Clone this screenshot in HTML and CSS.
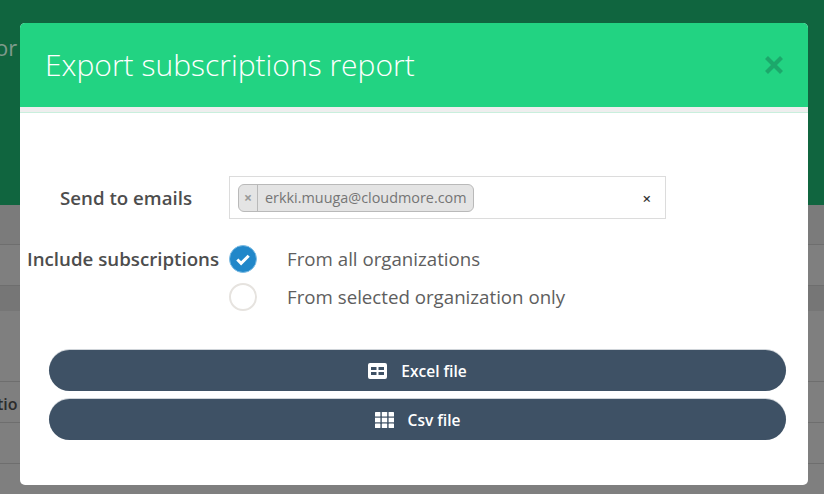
FILE: index.html
```html
<!DOCTYPE html>
<html lang="en">
<head>
<meta charset="utf-8">
<title>Export subscriptions report</title>
<link rel="stylesheet" href="styles.css">
</head>
<body>
<div class="page">
  <div class="hero"><span class="hero-text">or</span></div>
  <div class="row row-a"></div>
  <div class="row row-b"></div>
  <div class="row row-c"></div>
  <div class="row row-d"><span class="row-text">tio</span></div>
  <div class="row row-e"></div>
  <div class="row row-f"></div>
</div>
<div class="modal">
  <header class="modal-header">
    <h1 class="modal-title">Export subscriptions report</h1>
    <svg class="close" width="18" height="18" viewBox="0 0 18 18"><path d="M1.500 1.500 16.500 16.500M16.500 1.500 1.500 16.500" stroke="#1ca86b" stroke-width="4.200" fill="none"/></svg>
  </header>
  <div class="strip"></div>
  <div class="modal-body">
    <div class="field field-email">
      <label class="label label-email">Send to emails</label>
      <div class="select">
        <span class="tag"><span class="tag-x">×</span><span class="tag-text">erkki.muuga@cloudmore.com</span></span>
        <span class="clear">×</span>
      </div>
    </div>
    <div class="field field-radios">
      <label class="label label-include">Include subscriptions</label>
      <div class="radios">
        <div class="radio-row">
          <span class="radio radio-on"><svg width="16" height="13" viewBox="0 0 16 13"><path d="M2.300 6.500 6.100 10.300 13.700 2.700" stroke="#fff" stroke-width="3" fill="none"/></svg></span>
          <span class="radio-label">From all organizations</span>
        </div>
        <div class="radio-row">
          <span class="radio"></span>
          <span class="radio-label">From selected organization only</span>
        </div>
      </div>
    </div>
    <div class="actions">
      <button class="btn" type="button">
        <svg class="btn-icon" width="19" height="16" viewBox="0 0 19 16"><path fill="#fff" fill-rule="evenodd" d="M2 0H17A2 2 0 0 1 19 2V14A2 2 0 0 1 17 16H2A2 2 0 0 1 0 14V2A2 2 0 0 1 2 0ZM3 4V7H8.500V4ZM10.500 4V7H16V4ZM3 9V12H8.500V9ZM10.500 9V12H16V9Z"/></svg>
        <span>Excel file</span>
      </button>
      <button class="btn" type="button">
        <svg class="btn-icon" width="19" height="16" viewBox="0 0 19 16"><g fill="#fff"><rect width="5.400" height="4.600" rx=".6"/><rect x="6.800" width="5.400" height="4.600" rx=".6"/><rect x="13.600" width="5.400" height="4.600" rx=".6"/><rect y="5.700" width="5.400" height="4.600"/><rect x="6.800" y="5.700" width="5.400" height="4.600"/><rect x="13.600" y="5.700" width="5.400" height="4.600"/><rect y="11.400" width="5.400" height="4.600" rx=".6"/><rect x="6.800" y="11.400" width="5.400" height="4.600" rx=".6"/><rect x="13.600" y="11.400" width="5.400" height="4.600" rx=".6"/></g></svg>
        <span>Csv file</span>
      </button>
    </div>
  </div>
</div>
</body>
</html>
```
FILE: styles.css
```css
* { box-sizing: border-box; }
html, body { margin: 0; height: 100%; overflow: hidden; }
body { background: #7f7f7f; font-family: "Open Sans", sans-serif; position: relative; }

.page { display: flex; flex-direction: column; height: 494px; }
.hero { height: 205px; background: #10653f; color: #7f9a8c; font-size: 22px; padding: 37px 0 0; }
.hero-text { display: block; line-height: 20px; width: 20px; text-indent: -5px; }
.row { border-bottom: 1px solid #6e6e6e; flex: none; }
.row-a { height: 40px; background: #7b7b7b; }
.row-b { height: 41px; background: #7f7f7f; }
.row-c { height: 25px; background: #767676; border-bottom: 0; }
.row-d { height: 71px; color: #333; font-size: 16px; font-weight: 600; position: relative; }
.row-e { height: 41px; }
.row-f { height: 41px; }
.row-text { position: absolute; left: -3px; top: 83px; line-height: 20px; color: #2c2c2c; }

.modal { position: absolute; left: 20px; top: 23px; width: 788px; height: 462px; background: #fff; border-radius: 5px; overflow: hidden; display: flex; flex-direction: column; }
.modal-header { height: 84px; background: #22d382; display: flex; align-items: center; justify-content: space-between; padding: 0 25px 0 25px; flex: none; }
.modal-title { margin: 0; color: #fff; font-size: 30px; font-weight: 300; line-height: 40px; }
.close { display: block; margin-top: -1px; }
.strip { height: 6px; background: #eeeeee; border-bottom: 1px solid #c9efdd; flex: none; }
.modal-body { flex: 1; display: flex; flex-direction: column; padding: 63px 22px 0 29px; }

.field { display: flex; }
.field-email { align-items: center; margin-left: 180px; position: relative; }
.label { color: #4d4d4d; font-size: 18.700px; font-weight: 600; line-height: 24px; white-space: nowrap; }
.label-email { position: absolute; left: -169px; top: 10px; }
.select { width: 437px; height: 43px; border: 1px solid #dcdcdc; display: flex; align-items: center; justify-content: space-between; padding: 0 14px 0 8px; }
.tag { display: flex; height: 28px; border: 1px solid #b9b9b9; border-radius: 6px; background: #e4e4e4; color: #757575; font-size: 14.400px; line-height: 26px; }
.tag-x { width: 19px; border-right: 1px solid #b9b9b9; text-align: center; font-weight: 700; color: #999; font-size: 14px; }
.tag-text { padding: 0 6px 0 7px; font-weight: 400; }
.clear { color: #333; font-weight: 600; font-size: 15px; }

.field-radios { margin: 26px 0 0 -22px; gap: 10px; align-items: flex-start; }
.label-include { margin-top: 2px; }
.radios { display: flex; flex-direction: column; gap: 10px; }
.radio-row { display: flex; align-items: center; gap: 30px; height: 28px; }
.radio { width: 28px; height: 28px; border: 2px solid #e6e3df; border-radius: 50%; display: flex; align-items: center; justify-content: center; flex: none; }
.radio-on { background: #2187c9; border: 1px solid #7dbce4; }
.radio-label { color: #5e5e5e; font-size: 18.700px; line-height: 24px; white-space: nowrap; }

.actions { display: flex; flex-direction: column; gap: 8px; margin-top: 39px; }
.btn { height: 41px; border: 0; border-radius: 21px; background: #3e5165; color: #fff; font-family: inherit; font-size: 15.500px; font-weight: 600; display: flex; align-items: center; justify-content: center; gap: 14px; padding: 0; box-shadow: 0 -1px 0 #cfd4d9; }
.btn-icon { display: block; }
```
